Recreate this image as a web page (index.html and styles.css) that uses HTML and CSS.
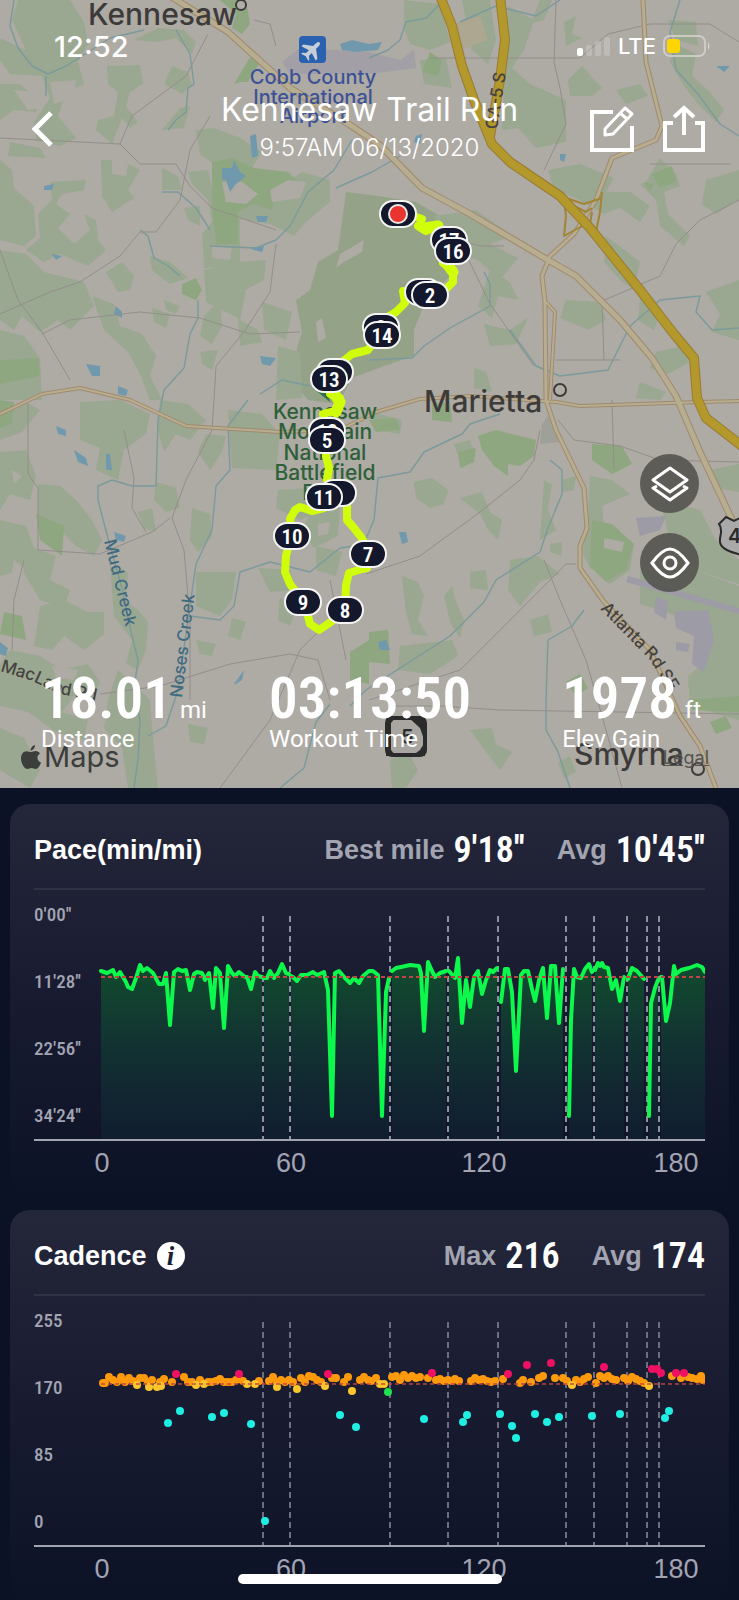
FILE: index.html
```
<!DOCTYPE html>
<html lang="en">
<head>
  <meta charset="UTF-8">
  <meta name="viewport" content="width=device-width, initial-scale=1">
  <title>Kennesaw Trail Run</title>
  <link rel="stylesheet" href="styles.css">
</head>
<body>
  <section class="hero">
    <svg class="map" viewBox="0 0 739 788" role="img" aria-label="Route map">
      <rect width="739" height="788" fill="#aeaaa4"/>

      <!-- woods -->
      <g fill="#9aa891">
        <path d="M18 0 70 0 84 22 88 44 78 62 84 84 66 92 58 116 76 138 60 146 36 140 34 122 50 98 42 76 10 74 0 60 0 38 26 50 12 20Z"/>
        <path d="M0 84 20 84 38 100 36 112 14 110 0 120Z"/>
        <path d="M107 66 140 65 143 84 130 92 126 106 138 122 130 128 122 118 112 144 96 130 98 120 114 116 118 92 108 84Z"/>
        <path d="M158 28 184 30 196 42 192 54 176 38 158 42 134 40Z"/>
        <path d="M172 66 188 72 192 86 182 94 164 84ZM180 108 190 106 184 128 162 130Z"/>
        <path d="M10 142 40 148 46 158 8 156ZM0 160 12 170 14 188 34 206 36 236 24 246 0 240Z"/>
        <path d="M101 160 112 160 112 174 126 176 128 164 140 170 128 190 134 198 112 212 102 196Z"/>
        <path d="M50 182 86 180 84 190 62 194 56 204 70 214 58 228 74 244 90 230 84 214 96 220 98 240 106 250 88 266 60 254 44 262 26 250 40 238 38 214 52 200Z"/>
        <path d="M0 250 26 254 44 272 84 282 94 306 70 330 58 320 40 332 22 316 14 330 0 320Z"/>
        <path d="M162 168 178 176 182 190 162 190ZM184 208 200 206 200 226 188 220Z"/>
        <path d="M106 272 122 262 134 276 130 290 118 292ZM150 256 170 262 188 278 170 284 152 270Z"/>
        <path d="M92 296 114 304 120 326 142 334 156 356 150 376 162 400 150 400 140 374 128 352 104 330Z"/>
        <path d="M0 330 24 336 40 358 42 400 0 400Z"/>
        <path d="M152 308 170 314 166 328 154 322ZM164 300 180 306 176 314 166 310Z"/>
        <path d="M196 130 214 128 240 138 262 152 252 168 284 184 302 172 330 180 330 202 306 222 294 236 270 224 240 220 240 266 204 268 202 234 212 222 208 200 192 184 188 172 208 170 212 188 216 166 200 154Z"/>
        <path d="M346 192 378 196 416 202 440 216 446 248 450 276 426 300 414 330 414 356 384 366 352 378 338 404 308 400 296 386 294 358 302 332 296 300 310 290 318 262 338 250Z" fill="#94a388"/>
        <path d="M238 262 266 260 264 280 246 290 240 320 258 330 262 342 240 346 238 318 206 302 204 270Z"/>
        <path d="M262 302 292 312 286 340 264 330ZM278 346 300 352 302 398 276 400Z"/>
        <path d="M204 316 220 300 222 326 212 344 200 336ZM200 352 218 350 212 370 202 364Z"/>
        <path d="M404 0 440 4 450 42 430 50 410 44 404 28ZM420 60 446 58 452 88 424 84Z"/>
        <path d="M462 0 490 0 496 40 488 64 472 50ZM508 6 534 20 524 50 512 68 530 84 566 100 566 142 536 148 518 128 502 130 504 92Z"/>
        <path d="M540 0 552 0 544 20 530 24ZM564 22 576 16 572 34 582 38 566 46Z"/>
        <path d="M568 80 582 66 602 88 592 96 570 96ZM616 90 640 84 648 96 626 104Z"/>
        <path d="M668 20 696 22 698 46 676 40ZM676 44 696 54 692 76 710 92 724 110 716 122 698 104 684 86 670 62Z"/>
        <path d="M548 170 580 164 614 178 606 192 630 192 650 206 640 222 620 208 604 214 576 198 554 190Z"/>
        <path d="M646 182 660 158 676 174 680 186 664 192 668 214 690 236 684 246 660 226 656 200 640 184Z"/>
        <path d="M706 180 739 170 739 200 716 214 702 204Z"/>
        <path d="M434 216 476 210 512 236 490 244 518 258 500 280 478 260 446 250Z"/>
        <path d="M606 236 640 262 634 290 620 280 604 262ZM640 298 660 312 654 330 638 320Z"/>
        <path d="M490 270 510 282 518 300 498 296 492 318 478 306ZM484 324 510 330 528 318 516 344 490 346Z"/>
        <path d="M566 300 600 302 606 320 588 330 560 318ZM474 368 486 372 492 392 474 388Z"/>
        <path d="M656 352 684 346 690 362 668 374 650 368ZM706 292 739 280 739 340 712 332 720 314Z"/>
        <path d="M640 382 666 392 660 400 636 398Z"/>
        <path d="M80 402 120 400 150 414 146 434 124 450 118 480 96 470 100 448 80 440Z"/>
        <path d="M160 400 188 404 206 420 190 440 176 434 164 452 158 430ZM206 434 226 436 222 452 210 470 198 452Z"/>
        <path d="M0 410 26 402 40 410 22 432 0 440ZM0 452 26 450 36 476 30 500 10 494 0 510Z"/>
        <path d="M38 484 60 486 76 500 92 520 102 540 94 556 76 546 62 532 38 526Z"/>
        <path d="M156 482 176 488 180 508 166 512 154 500ZM138 512 152 508 156 532 144 528Z"/>
        <path d="M228 410 262 414 280 434 276 470 232 468 230 446Z"/>
        <path d="M0 520 26 526 34 548 56 556 50 580 70 590 64 608 40 600 22 570 0 576Z"/>
        <path d="M40 606 64 600 88 612 104 612 104 634 84 650 64 636 52 650 34 646Z"/>
        <path d="M110 566 128 572 126 602 138 610 148 622 146 650 138 670 126 664 132 640 114 616Z"/>
        <path d="M192 508 210 514 212 536 198 552 190 540ZM196 572 236 572 232 600 220 616 196 606Z"/>
        <path d="M278 490 312 488 320 512 300 520 276 508ZM312 508 340 508 338 536 314 548 302 532Z"/>
        <path d="M232 618 246 622 240 640 228 636ZM196 640 216 644 212 656 200 654ZM258 568 290 570 296 590 270 592Z"/>
        <path d="M10 650 40 656 62 670 88 664 100 682 92 702 74 696 62 712 88 720 84 740 56 732 28 712 0 706 0 664Z"/>
        <path d="M118 670 134 684 150 700 152 728 158 788 128 788 122 748 104 728 108 700Z"/>
        <path d="M0 728 24 738 40 770 30 788 0 770ZM188 724 208 728 204 744 190 742Z"/>
        <path d="M316 546 342 552 336 576 316 570ZM280 598 296 610 290 626 278 620Z"/>
        <path d="M372 412 402 420 400 434 376 430ZM414 482 432 478 448 490 444 504 430 508 416 498Z"/>
        <path d="M460 498 482 492 490 512 502 520 498 540 488 530 480 514Z"/>
        <path d="M444 596 452 586 456 602 464 620 460 638 450 622ZM402 576 418 582 424 596 418 620 428 636 412 634 406 612Z"/>
        <path d="M470 572 486 570 488 590 470 588ZM544 480 552 484 548 510 556 530 540 540Z"/>
        <path d="M510 560 538 556 560 574 540 582 520 606 508 590ZM550 544 562 542 562 556 550 552Z"/>
        <path d="M454 444 470 440 476 456 462 468ZM562 480 576 476 574 490 562 492Z"/>
        <path d="M400 646 452 640 458 656 430 674 398 670ZM530 620 548 614 552 632 534 636Z"/>
        <path d="M470 730 492 728 496 744 512 752 500 770 486 752ZM390 760 408 752 418 770 406 788 392 788Z"/>
        <path d="M590 476 612 480 630 494 602 506 604 528 634 544 630 570 610 584 590 568 582 552 588 524Z"/>
        <path d="M640 570 690 568 739 586 739 720 690 706 688 676 708 660 690 620 640 604Z"/>
        <path d="M558 762 570 756 576 772 564 778ZM710 470 739 464 739 492 716 488Z"/>
        <path d="M660 500 700 510 716 540 739 560 739 584 696 570 670 540Z"/>
      </g>

      <!-- parks -->
      <g fill="#8fa780">
        <path d="M234 84 252 54 260 62 248 82 240 82ZM220 0 246 0 250 24 242 34 232 28 236 14Z"/>
        <path d="M212 162 232 158 254 168 288 172 298 182 276 194 272 210 254 204 238 212 238 244 216 244 212 208Z"/>
        <path d="M182 284 196 278 202 290 196 300 182 294ZM0 360 38 358 40 376 0 384Z"/>
        <path d="M0 400 14 402 12 424 0 428ZM36 514 64 526 62 556 40 540ZM4 612 22 616 26 640 0 634Z"/>
        <path d="M478 436 496 430 536 440 534 456 520 466 508 464 508 476 494 466 482 450Z"/>
        <path d="M458 452 476 448 474 462 460 468ZM592 444 622 446 632 464 612 474 592 460Z"/>
        <path d="M652 174 672 166 676 182 660 188ZM644 182 654 184 650 192Z"/>
        <path d="M592 520 612 524 634 544 626 570 606 582 590 566Z"/>
        <path d="M432 404 450 402 452 422 432 420ZM369 420 396 418 400 430 376 432Z"/>
        <path d="M430 52 442 60 438 76 422 72ZM369 632 388 630 390 664 369 662ZM350 652 369 640 369 684 350 680Z"/>
        <path d="M566 682 580 674 588 688 576 696ZM710 722 726 716 732 728 716 734Z"/>
        <path d="M688 700 739 696 739 712 692 710Z"/>
      </g>

      <!-- clearings inside the woods -->
      <g fill="#aeaaa4">
        <path d="M14 90 36 92 42 108 28 110ZM50 82 76 80 74 98 54 104ZM222 182 242 182 258 194 246 204 226 202Z"/>
        <path d="M270 190 288 180 306 182 300 198 272 202ZM242 218 270 228 264 240 242 236ZM212 246 232 248 230 260 212 258Z"/>
        <path d="M354 246 364 240 362 252 344 262 336 268 340 254ZM316 322 322 318 326 338 318 342ZM284 248 296 246 310 262 300 298 288 294Z"/>
        <path d="M604 538 624 542 622 552 604 548ZM150 402 160 400 158 416 150 414ZM12 470 22 476 14 484Z"/>
        <path d="M14 560 24 568 18 604 8 592ZM52 666 78 670 74 680 56 678ZM318 524 330 522 328 534 318 536Z"/>
      </g>

      <!-- built up areas and runways -->
      <g fill="#9c9ba6">
        <path d="M282 62 300 48 369 52 400 60 414 50 416 68 369 74 290 74Z" opacity=".7"/>
        <path d="M636 518 666 516 660 530 640 536ZM656 596 668 602 666 620 654 612Z"/>
        <path d="M674 612 708 610 714 640 704 672 692 664 694 636 676 628ZM676 642 690 644 688 652 676 650Z"/>
        <path d="M628 576 739 608 739 614 626 582Z"/>
        <path d="M542 424 548 416 560 442 540 444Z" fill="#9fa198"/>
        <path d="M454 24 480 16 488 40 460 50Z" fill="#ada690"/>
      </g>

      <!-- lakes -->
      <g fill="#7199ad">
        <path d="M340 44 352 40 369 44 382 42 378 50 356 52 342 50ZM250 136 256 134 258 156 252 158Z"/>
        <path d="M222 168 232 168 234 160 240 172 246 176 236 184 230 192 226 180 222 180ZM256 216 268 216 266 222 258 222Z"/>
        <path d="M44 186 54 184 52 190 44 190ZM52 254 62 256 56 260ZM116 306 122 312 122 318 114 314Z"/>
        <path d="M86 364 100 366 100 376 92 376ZM118 386 128 390 126 396 118 394ZM260 356 276 358 270 366 262 364Z"/>
        <path d="M250 248 264 246 262 252 254 250ZM56 426 66 430 66 436 58 434ZM74 450 86 458 88 466 78 462ZM106 454 110 454 112 470 106 470Z"/>
        <path d="M114 532 126 536 124 542 116 540ZM0 642 8 648 6 656 0 654ZM234 684 244 670 242 680 236 684Z"/>
        <path d="M399 532 406 532 408 542 402 544ZM378 642 386 640 390 650 380 650ZM716 66 730 66 724 72Z"/>
        <path d="M560 154 566 154 564 162 560 160ZM416 136 422 134 420 144 414 142Z"/>
      </g>

      <!-- creeks -->
      <g fill="none" stroke="#7b9a9c" stroke-width="1.4" stroke-linejoin="round">
        <path d="M14 0 10 26 18 48 32 66 48 74 66 66 82 56 110 38 144 30"/>
        <path d="M46 76 46 96M176 30 190 54 194 84 188 88 186 112 176 120 168 130"/>
        <path d="M162 192 178 192 196 208 210 230M140 230 148 236 154 258 168 266 180 276M198 300 198 318 190 334 184 368 164 390 158 420 156 486 132 486 112 480 98 486 98 500 110 546 122 588 132 636 138 660 134 690 140 720 138 760 134 788"/>
        <path d="M352 140 334 170 308 192 290 226 276 240 256 248 210 246M400 156 372 172 336 188"/>
        <path d="M248 400 228 426 230 470 216 486 212 530 196 564 188 620 178 690 166 726 148 736"/>
        <path d="M260 394 282 380 310 386M190 616 220 620 234 606 240 572 270 562 310 572 340 548 369 544"/>
        <path d="M369 58 388 50 400 40 406 22 426 18 440 4M460 22 496 6 536 16 560 0"/>
        <path d="M680 0 670 32 676 70 698 94 720 124 739 136"/>
        <path d="M369 360 412 358 424 346 450 328 490 306 490 284 484 272M510 330 536 366 560 376 608 370 630 326 660 300 700 296 696 312 712 330 739 328"/>
        <path d="M500 414 470 424 462 434 424 452 410 472 378 478 374 520 362 548"/>
        <path d="M550 460 562 470 562 494 548 528 540 552 496 580 484 602 450 636 400 668 366 690 350 706"/>
        <path d="M584 610 572 626 548 640 546 700 546 730 558 752 570 788M330 704 316 722 304 768 280 788"/>
      </g>

      <!-- minor roads -->
      <g fill="none" stroke="#938e8a" stroke-width="1">
        <path d="M0 138 120 144 140 164 176 164 190 186 212 208 276 230M208 34 186 76 132 116 120 144M254 20 270 24 276 46"/>
        <path d="M0 314 50 292 80 282 120 256 140 232 156 232 180 200 190 150 210 116M0 250 18 300 42 332 70 380"/>
        <path d="M42 334 70 320 140 312 200 318 250 334 300 332M276 244 270 292 244 332 216 366 214 400"/>
        <path d="M214 400 212 430 186 480 172 518 184 550 190 620 190 700M28 400 28 474 38 488 38 550 100 554 152 532 170 518"/>
        <path d="M124 430 134 478 132 508 146 532M12 650 14 600 24 560M100 694 160 686 230 664 290 654 318 660 330 700"/>
        <path d="M220 788 270 720 300 650 318 632M330 580 346 660"/>
        <path d="M556 0 554 62 560 88 566 124 544 170M430 58 580 58 608 34 650 24 710 24 739 42"/>
        <path d="M650 164 730 164M739 200 700 220 676 244 660 276 600 302M460 240 480 246 504 246"/>
        <path d="M464 250 490 304 534 366M602 302 604 360M556 360 620 360M366 574 420 556 480 512 520 480 534 460 540 430"/>
        <path d="M369 700 460 670 520 610 566 564 576 564M544 560 560 600 586 660 606 730 622 788"/>
        <path d="M390 706 440 706 500 710 739 714M612 400 614 470M558 420 574 440 620 446 660 460 739 462"/>
      </g>

      <!-- main roads -->
      <g fill="none" stroke-linejoin="round">
        <g stroke="#a08a6c">
          <path stroke-width="7" d="M170 -4 228 32 290 88 350 125 380 145 422 188 470 214 548 260 576 276 620 320 652 358 676 396 700 452 735 526"/>
          <path stroke-width="5" d="M643 0 646 62 662 126 656 140 612 158 596 200 574 234 550 256 542 276 545 302 546 400 556 430 584 488 587 528 580 546 580 568 604 602 650 650 680 716 700 746 716 788"/>
          <path stroke-width="4" d="M546 302 555 312 550 400M0 414 42 394 80 388 130 400 186 426 280 432 340 430 376 412 420 399 470 396 556 402 580 406 700 402 739 401"/>
        </g>
        <g stroke="#b7ad90">
          <path stroke-width="5" d="M170 -4 228 32 290 88 350 125 380 145 422 188 470 214 548 260 576 276 620 320 652 358 676 396 700 452 735 526"/>
          <path stroke-width="3" d="M643 0 646 62 662 126 656 140 612 158 596 200 574 234 550 256 542 276 545 302 546 400 556 430 584 488 587 528 580 546 580 568 604 602 650 650 680 716 700 746 716 788"/>
          <path stroke-width="2" d="M546 302 555 312 550 400M0 414 42 394 80 388 130 400 186 426 280 432 340 430 376 412 420 399 470 396 556 402 580 406 700 402 739 401"/>
        </g>
        <path stroke="#a38432" stroke-width="2" d="M564 200 566 216 564 236 582 226M566 198 584 204 602 198M602 192 600 212 596 232M570 204 586 212 592 208M592 212 590 224"/>
        <path stroke="#9a7b33" stroke-width="10" d="M440 -4 452 26 462 66 474 100 492 144 510 162 560 196 590 228 640 290 674 334 694 358 697 398 706 418 742 446M500 -4 505 40 500 80 490 136"/>
        <path stroke="#b3982b" stroke-width="8" d="M440 -4 452 26 462 66 474 100 492 144 510 162 560 196 590 228 640 290 674 334 694 358 697 398 706 418 742 446M500 -4 505 40 500 80 490 136"/>
      </g>

      <!-- place names -->
      <g class="map-city">
        <text x="88" y="25">Kennesaw</text>
        <text x="424" y="412">Marietta</text>
        <text x="574" y="765">Smyrna</text>
      </g>
      <g fill="#b0aca6" stroke="#3d3b39" stroke-width="2">
        <circle cx="241" cy="5" r="5"/>
        <circle cx="560" cy="390" r="6"/>
        <circle cx="698" cy="769" r="6"/>
      </g>
      <rect x="299" y="36" width="27" height="27" rx="4" fill="#2a62b0"/>
      <path transform="translate(312.500 49.500) rotate(45)" fill="#c9ced6" d="M0-10C1.500-10 2-8 2-6V-3L10 3V5.500L2 3V7L5 9.500V11L0 9.500-5 11V9.500L-2 7V3L-10 5.500V3L-2-3V-6C-2-8-1.500-10 0-10Z"/>
      <g class="map-airport">
        <text x="313" y="84">Cobb County</text>
        <text x="313" y="104">International</text>
        <text x="313" y="123">Airport</text>
      </g>
      <path d="M313 388 320 384 328 394 330 402Z" fill="#2f7342"/>
      <g class="map-park">
        <text x="325" y="419">Kennesaw</text>
        <text x="325" y="439">Mountain</text>
        <text x="325" y="460">National</text>
        <text x="325" y="480">Battlefield</text>
        <text x="325" y="500">Park</text>
      </g>
      <g class="map-creek">
        <text transform="translate(104 541) rotate(76)">Mud Creek</text>
        <text transform="translate(182 698) rotate(-83)">Noses Creek</text>
      </g>
      <g class="map-road">
        <text transform="translate(497 130) rotate(-81)">GA-5 S</text>
        <path id="atlanta" fill="none" d="M600 609 650 660 690 724"/>
        <text><textPath href="#atlanta">Atlanta Rd SE</textPath></text>
        <path id="macland" fill="none" d="M0 671 30 680 60 694 120 706"/>
        <text><textPath href="#macland">MacLand Rd</textPath></text>
      </g>
      <!-- route shields -->
      <rect x="387" y="718" width="38" height="37" rx="5" fill="#a9a6a1" stroke="#2b2b2b" stroke-width="4"/>
      <path d="M386 717H396L391 723V750L396 756H386ZM408 717H425V742L420 728ZM425 742V756H412L420 750Z" fill="#2b2b2b"/>
      <text class="shield" x="401" y="744">5</text>
      <path d="M742 517 734 521 726 517 719 524C724 530 719 536 720 542 721 549 730 552 742 555Z" fill="#aaa9a9" stroke="#2b2b2b" stroke-width="2"/>
      <text class="shield" x="728" y="543">4</text>

      <!-- recorded track -->
      <g fill="none" stroke="#cffd0a" stroke-width="8" stroke-linejoin="round" stroke-linecap="round">
        <path d="M416 217 422 219 418 226 426 231 438 227 440 230 448 238 453 251 443 263 453 270 453 282 447 288 430 295 403 291 405 303 396 312 386 318 378 336 368 350 352 354 342 362 331 378 330 394 340 398 338 410 323 414 327 430 326 456 329 468 327 480 338 493 347 506 347 520 354 528 361 537 368 549 367 568 362 569 349 573 346 585 345 609 336 618 328 624 319 630 310 624 307 612 303 601 290 584 285 572 286 556 288 548 292 534 290 519 295 510 300 507 312 511 324 508 330 498"/>
        <path stroke-width="11" d="M424 228 438 226M333 392 340 402 336 412M447 264 453 272"/>
      </g>
      <g id="markers"></g>
      <circle cx="398" cy="214" r="9" fill="#e9352f" stroke="#ece9e6" stroke-width="2"/>
    </svg>

    <div class="credit">
      <span class="brand">
        <svg width="20" height="24" viewBox="0 0 20 24" fill="#3b3e3a" aria-hidden="true">
          <path d="M14 0C14 3 12 5.500 9.500 5.500 9.500 3 11.500.5 14 0ZM10 7C11.500 7 12.500 6 14.500 6 16.500 6 18 7 19 8.500 15 11 16 16 20 17.500 19 20.500 17 24 14.500 24 13 24 12.500 23 10.500 23S8 24 6.500 24C3 24 0 18 0 13.500 0 9 2.500 6.200 5.500 6.200 7.500 6.200 8.800 7 10 7Z"/>
        </svg>
        Maps
      </span>
      <a class="legal" href="#legal">Legal</a>
    </div>

    <div class="overlay">
      <div class="status">
        <time>12:52</time>
        <div class="status-right">
          <svg width="34" height="20" viewBox="0 0 34 20" fill="#fff" aria-hidden="true">
            <rect y="12" width="6" height="8" rx="2"/>
            <g opacity=".2">
              <rect x="9" y="9" width="6" height="11" rx="2"/>
              <rect x="18" y="5" width="6" height="15" rx="2"/>
              <rect x="27" y="1" width="6" height="19" rx="2"/>
            </g>
          </svg>
          <span>LTE</span>
          <svg width="48" height="22" viewBox="0 0 48 22" aria-hidden="true">
            <rect x="1" y="1" width="41" height="20" rx="6" fill="none" stroke="#d6d4d0" stroke-width="2" opacity=".8"/>
            <rect x="4" y="4" width="13" height="14" rx="3" fill="#fcd503"/>
            <path d="M45 7Q48 11 45 15Z" fill="#d6d4d0"/>
          </svg>
        </div>
      </div>

      <header class="topbar">
        <button class="icon-btn" aria-label="Back">
          <svg width="24" height="36" viewBox="0 0 24 36" fill="none" stroke="#fff" stroke-width="5"><path d="M19 2 3 18 19 34"/></svg>
        </button>
        <div class="heading">
          <h1>Kennesaw Trail Run</h1>
          <p>9:57AM 06/13/2020</p>
        </div>
        <div class="actions">
          <button class="icon-btn" aria-label="Edit">
            <svg width="46" height="48" viewBox="0 0 46 48" fill="none" stroke="#fff" stroke-width="4">
              <path d="M24 7H3V45H43V21"/>
              <path stroke-width="3" stroke-linejoin="round" d="M16 24 36 3 43 9 24 29 16 30ZM31 8 38 14"/>
            </svg>
          </button>
          <button class="icon-btn" aria-label="Share">
            <svg width="46" height="48" viewBox="0 0 46 48" fill="none" stroke="#fff" stroke-width="4">
              <path d="M12 18H4V45H42V18H34"/>
              <path d="M23 30V5M13 12 23 3 33 12"/>
            </svg>
          </button>
        </div>
      </header>

      <div class="tools">
        <button class="round" aria-label="Map layers">
          <svg width="38" height="36" viewBox="0 0 38 36" fill="none" stroke="#fff" stroke-width="3" stroke-linejoin="round">
            <path d="M19 2 36 14 19 26 2 14Z"/><path d="M6 20 2 22 19 34 36 22 32 20"/>
          </svg>
        </button>
        <button class="round" aria-label="Show or hide">
          <svg width="40" height="32" viewBox="0 0 40 32" fill="none" stroke="#fff" stroke-width="3">
            <path d="M2 16C10 5 15 2 20 2S30 5 38 16C30 27 25 30 20 30S10 27 2 16Z"/><circle cx="20" cy="16" r="6"/>
          </svg>
        </button>
      </div>

      <dl class="stats">
        <div><dd><b>18.01</b> mi</dd><dt>Distance</dt></div>
        <div><dd><b>03:13:50</b></dd><dt>Workout Time</dt></div>
        <div><dd><b>1978</b> ft</dd><dt>Elev Gain</dt></div>
      </dl>
    </div>
  </section>

  <main>
    <section class="card">
      <div class="card-head">
        <h2>Pace(min/mi)</h2>
        <p>Best mile <b>9'18''</b></p>
        <p>Avg <b>10'45''</b></p>
      </div>
      <svg class="chart" id="pace" viewBox="0 0 671 304" role="img" aria-label="Pace over time">
        <defs>
          <linearGradient id="paceFill" gradientUnits="userSpaceOnUse" x1="0" y1="80" x2="0" y2="250">
            <stop offset="0" stop-color="#104f2e" stop-opacity=".9"/>
            <stop offset="1" stop-color="#10303a" stop-opacity=".3"/>
          </linearGradient>
        </defs>
      </svg>
    </section>

    <section class="card">
      <div class="card-head">
        <h2>Cadence</h2>
        <button class="info" aria-label="About cadence">i</button>
        <p>Max <b>216</b></p>
        <p>Avg <b>174</b></p>
      </div>
      <svg class="chart" id="cadence" viewBox="0 0 671 304" role="img" aria-label="Cadence over time"></svg>
    </section>
  </main>

  <div class="home-bar"></div>

  <script src="charts.js"></script>
</body>
</html>
```
FILE: styles.css
```
* { box-sizing: border-box; }
body { margin: 0; background: #0c1225; color: #fff; font-family: "Liberation Sans", Arial, sans-serif; }
h1, h2, p, dl, dd { margin: 0; font-weight: normal; }
button { background: none; border: none; padding: 0; color: inherit; cursor: pointer; }
svg { display: block; }

/* map with everything that lies over it */
.hero { display: grid; font-family: Inter, sans-serif; }
.hero > * { grid-area: 1 / 1; }
.map { width: 100%; height: auto; }
.map-city { font-size: 30px; font-weight: 500; fill: #3d3b39; }
.map-airport { font-size: 20px; font-weight: 500; fill: #3c5196; text-anchor: middle; }
.map-park { font-size: 21px; font-weight: 500; fill: #2d6039; text-anchor: middle; }
.map-creek { font-size: 17px; font-weight: 500; fill: #3f6a80; }
.map-road { font-size: 17px; font-weight: 500; fill: #45423f; }
.shield { font-size: 20px; font-weight: 600; fill: #2b2b2b; }
.marker rect { fill: #14182d; stroke: #f4f4f2; stroke-width: 2; }
.marker text { font: 600 21px "Roboto Condensed", sans-serif; fill: #fff; text-anchor: middle; }

.credit { align-self: end; display: flex; justify-content: space-between; align-items: center; padding: 0 30px 14px 21px; color: #3b3e3a; }
.brand { display: flex; align-items: center; gap: 3px; font-size: 29px; line-height: 34px; }
.legal { font-size: 18px; color: #55534f; }

.overlay { display: flex; flex-direction: column; padding: 28px 0 35px; }
.status { display: flex; justify-content: space-between; align-items: center; height: 36px; padding: 0 28px 0 54px; font-size: 29px; font-weight: 500; }
.status-right { display: flex; align-items: center; gap: 7px; font-size: 22px; }

.topbar { display: grid; grid-template-columns: 1fr auto 1fr; align-items: center; margin-top: 27px; padding: 0 32px; }
.heading { text-align: center; }
.heading h1 { font-size: 32px; line-height: 38px; }
.heading p { font-size: 24px; line-height: 38px; font-weight: 300; }
.actions { display: flex; justify-content: flex-end; gap: 26px; }

.tools { display: flex; flex-direction: column; align-items: flex-end; gap: 20px; margin: auto 40px 0 0; }
.round { width: 59px; height: 59px; border-radius: 50%; background: rgba(80, 79, 74, .85); display: grid; place-items: center; }

.stats { display: grid; grid-template-columns: 7fr 9fr 4fr; margin-top: 81px; padding: 0 38px 0 41px; font-family: Roboto, sans-serif; }
.stats > div { white-space: nowrap; }
.stats dd { display: flex; align-items: baseline; gap: 8px; height: 52px; font-size: 24px; line-height: 52px; }
.stats b { font: 600 57px/52px "Roboto Condensed", sans-serif; }
.stats dt { font-size: 24px; line-height: 28px; }

/* chart cards */
main { display: grid; gap: 16px; padding: 16px 10px 0; }
.card { padding: 0 24px; border-radius: 20px; background: linear-gradient(#24273a, #1b1d32 40%, #11162b 80%, #0c1226); }
.card-head { display: flex; align-items: center; gap: 10px; height: 86px; padding-top: 8px; border-bottom: 2px solid #2e3244; }
.card-head h2 { font-size: 27px; font-weight: bold; }
.card-head p { display: flex; align-items: center; gap: 9px; font-size: 27px; font-weight: bold; color: #a3a4b2; margin-left: 22px; }
.card-head h2 + p, .info + p { margin-left: auto; }
.card-head p b { font: 600 36px/44px "Roboto Condensed", sans-serif; color: #fff; }
.info { width: 28px; height: 28px; border-radius: 50%; background: #fff; color: #1c1f32; font: italic bold 27px/26px "Liberation Serif", serif; }
.chart { width: 100%; height: auto; }
.chart .y-label { font: 500 19px "Roboto Condensed", sans-serif; fill: #a3a4b2; }
.chart .x-label { font-size: 27px; fill: #a3a4b2; text-anchor: middle; }
.chart .axis { stroke: #a3a4b2; stroke-width: 2; }
.chart .lap { stroke: #8e90a0; stroke-width: 2; stroke-dasharray: 6 4; }
.chart .avg { stroke: #c0443f; stroke-width: 2; stroke-dasharray: 4 3; }
.chart .line { fill: none; stroke: #0cf84c; stroke-width: 4; stroke-linejoin: round; stroke-linecap: round; }
.chart .area { fill: url(#paceFill); }
#cadence .lap { stroke: #6d6f80; }

.home-bar { position: fixed; bottom: 16px; left: 50%; width: 264px; height: 10px; margin-left: -132px; border-radius: 5px; background: #fff; }
```
FILE: charts.js
```
const NS = 'http://www.w3.org/2000/svg';

function add(parent, tag, attrs, text) {
  const el = document.createElementNS(NS, tag);
  for (const k in attrs) el.setAttribute(k, attrs[k]);
  if (text !== undefined) el.textContent = text;
  parent.appendChild(el);
  return el;
}

// mile markers, drawn in order so that later ones cover earlier ones
const markers = [
  [398, 214, ''], [449, 240, '17'], [453, 251, '16'], [423, 292, ''], [430, 295, '2'],
  [381, 327, '3'], [382, 335, '14'], [335, 372, ''], [329, 379, '13'],
  [327, 431, '12'], [327, 440, '5'], [338, 493, ''], [324, 497, '11'],
  [292, 536, '10'], [368, 554, '7'], [303, 602, '9'], [345, 610, '8']
];
const markerLayer = document.getElementById('markers');
markers.forEach(([x, y, n]) => {
  const g = add(markerLayer, 'g', { class: 'marker' });
  add(g, 'rect', { x: x - 18, y: y - 13, width: 36, height: 26, rx: 13 });
  add(g, 'text', { x: x, y: y + 8 }, n);
});

const laps = [229, 256, 356, 414, 464, 532, 560, 593, 613, 625];

function frame(svg, yLabels) {
  laps.forEach(x => add(svg, 'line', { class: 'lap', x1: x, x2: x, y1: 26, y2: 249 }));
  add(svg, 'line', { class: 'axis', x1: 0, x2: 671, y1: 250, y2: 250 });
  yLabels.forEach((t, i) => add(svg, 'text', { class: 'y-label', x: 0, y: 31 + i * 67 }, t));
  [['0', 68], ['60', 257], ['120', 450], ['180', 642]].forEach(([t, x]) =>
    add(svg, 'text', { class: 'x-label', x: x, y: 282 }, t));
}

// pace, one run of points per lap
const pace = [
  '67,81 73,83 79,80 82,87 86,82 92,92 94,97 98,99 102,88 106,75 109,81 113,78 119,83 125,94 129,94 132,83 136,135 140,82 144,79 148,81 152,80 156,100 160,84 163,82 168,83 171,90 175,83 179,118 182,78 186,83 190,138 194,76 198,83 201,86 205,82 211,87 213,87 217,99 221,82 224,86 228,87',
  '230,88 233,88 236,81 240,88 244,83 248,74 252,83 255,84',
  '257,86 259,87 263,91 267,85 273,85 279,82 283,85 290,82 294,100 298,226 301,83 305,81 311,88 316,93 320,88 325,93 329,86 335,81 339,81 344,85 348,226 352,102 355,88',
  '358,81 362,78 367,77 376,75 385,76 387,83 390,141 394,72 398,81 401,87 406,83 412,81',
  '415,81 421,88 424,68 428,133 432,90 436,117 440,87 444,81 448,104 452,90 456,80 459,82 463,78',
  '467,112 471,79 474,79 478,102 482,181 487,85 490,81 494,81 498,99 501,111 505,90 509,78 513,128 517,76 521,76 525,133 529,79',
  '535,226 537,130 540,79 543,87 547,88 551,79 555,74 558,82',
  '561,80 564,73 566,76 568,73 570,77 574,78 578,99 582,90 586,111 590,87',
  '594,89 598,78 603,81 610,89',
  '615,226 617,113 621,98 624,90',
  '627,87 628,87 632,131 636,113 640,76 642,84 647,80 655,78 663,75 668,77 671,82'
];
const paceSvg = document.getElementById('pace');
pace.forEach(run => {
  const pts = run.split(' ');
  const first = pts[0].split(',')[0], last = pts[pts.length - 1].split(',')[0];
  add(paceSvg, 'polygon', { class: 'area', points: first + ',249 ' + run + ' ' + last + ',249' });
});
frame(paceSvg, ["0'00''", "11'28''", "22'56''", "34'24''"]);
pace.forEach(run => add(paceSvg, 'polyline', { class: 'line', points: run }));
add(paceSvg, 'line', { class: 'avg', x1: 67, x2: 671, y1: 87, y2: 87 });

// cadence dots by zone colour
const cadence = {
  '#ff9a0d': '69,87 71,87 75,81 79,84 83,86 87,81 91,86 95,82 99,85 106,82 110,82 114,86 118,84 126,86 130,83 138,86 150,81 154,86 158,86 166,84 174,86 178,86 182,85 186,83 190,86 194,86 198,86 202,84 205,83 209,85 225,85 235,85 239,81 243,86 247,84 251,86 255,84 259,86 267,82 271,86 275,80 279,81 283,84 287,86 298,82 302,82 310,86 314,81 326,84 330,81 334,84 337,85 342,82 358,81 362,80 366,84 370,79 374,82 378,80 382,82 386,81 394,82 402,84 406,83 410,85 414,84 418,85 421,83 425,85 437,85 441,82 445,84 449,83 453,85 457,86 461,85 469,83 486,87 489,84 497,86 505,82 509,80 521,82 529,82 533,85 542,84 546,86 550,83 554,81 562,87 566,80 570,82 574,80 578,83 582,84 590,82 594,85 598,81 602,83 606,85 610,87 638,80 647,82 654,81 658,82 663,83 667,80 669,84',
  '#fbc52c': '103,89 115,91 123,91 127,90 162,89 170,88 213,88 221,88 243,91 263,93 291,90 318,95 346,88 350,88 538,89 615,90',
  '#1fe04e': '354,96',
  '#ee1163': '142,78 205,78 294,78 398,77 474,78 493,69 517,67 570,71 618,73 623,73 627,77 642,77 650,77',
  '#1fefe2': '134,127 146,115 178,121 190,117 217,128 231,225 306,119 322,131 390,123 429,126 433,119 466,118 478,130 482,142 501,118 513,126 525,121 558,120 586,118 631,122 635,115'
};
const cadenceSvg = document.getElementById('cadence');
frame(cadenceSvg, ['255', '170', '85', '0']);
for (const color in cadence) {
  cadence[color].split(' ').forEach(p => {
    const [x, y] = p.split(',');
    add(cadenceSvg, 'circle', { cx: x, cy: y, r: 4, fill: color });
  });
}
add(cadenceSvg, 'line', { class: 'avg', x1: 67, x2: 671, y1: 88, y2: 88, opacity: .7 });
```
